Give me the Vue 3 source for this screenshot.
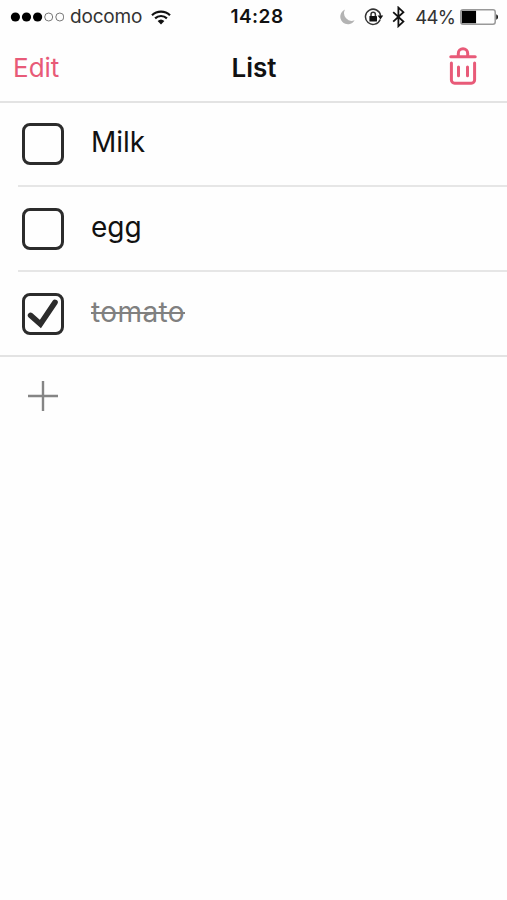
<template>
  <div class="screen">
    <div class="status-bar">
      <div class="status-left">
        <svg class="signal" width="54" height="12" viewBox="0 0 54 12">
          <circle
            v-for="n in 5"
            :key="n"
            :cx="5.4 + (n - 1) * 11.1"
            cy="6"
            :r="n <= signal ? 4.6 : 4"
            :class="n <= signal ? 'dot-on' : 'dot-off'"
          />
        </svg>
        <span class="carrier">docomo</span>
        <svg class="wifi" width="20" height="15" viewBox="0 0 20 15">
          <path d="M1 5.2a13 13 0 0 1 18 0" />
          <path d="M4.1 8.4a8.5 8.5 0 0 1 11.8 0" />
          <path class="wifi-core" d="M6.6 11.1a5 5 0 0 1 6.8 0L10 14.6z" />
        </svg>
      </div>
      <span class="clock">14:28</span>
      <div class="status-right">
        <svg class="moon" width="15" height="16" viewBox="0 0 15 16">
          <path d="M5 0.6A7.6 7.6 0 1 0 14.6 11.2A7.6 7.6 0 0 1 5 0.6z" />
        </svg>
        <svg class="lock" width="20" height="18" viewBox="0 0 20 18">
          <path class="ring" d="M16.2 11.4a7.6 7.6 0 1 1 .4-3.6" />
          <path class="fill" d="M13.6 7.6h5.6l-2.7 3.8z" />
          <rect class="fill" x="5.4" y="8" width="7.6" height="5.6" rx="0.6" />
          <path class="ring" d="M7 8V6.4a2.2 2.2 0 0 1 4.4 0V8" />
        </svg>
        <svg class="bluetooth" width="13" height="22" viewBox="0 0 13 22">
          <path d="M1.2 6.2l10.2 9.4-5 4.6V1.6l5 4.6L1.2 15.6" />
        </svg>
        <span class="percent">{{ battery }}%</span>
        <svg class="battery" width="38" height="16" viewBox="0 0 38 16">
          <rect class="shell" x="0.8" y="0.8" width="34.4" height="14.4" rx="2.2" />
          <rect x="1.8" y="1.8" :width="32.4 * battery / 100" height="12.4" />
          <path d="M36.3 5.3q1.7.6 1.7 2.7t-1.7 2.7z" />
        </svg>
      </div>
    </div>

    <header class="nav-bar">
      <button class="edit">Edit</button>
      <h1 class="title">List</h1>
      <button class="trash" @click="removeDone">
        <svg width="30" height="40" viewBox="0 0 30 40">
          <path d="M2.8 11.7h24.4" />
          <path d="M10.3 11.2V8.4a4.7 4.7 0 0 1 9.4 0v2.8" />
          <path d="M3.4 18v17a3.2 3.2 0 0 0 3.2 3.2h16.8a3.2 3.2 0 0 0 3.2-3.2V18" />
          <path d="M10.5 22v8.8M19.5 22v8.8" />
        </svg>
      </button>
    </header>

    <ul class="list">
      <li
        v-for="item in items"
        :key="item.id"
        class="row"
        :class="{ done: item.done }"
        @click="item.done = !item.done"
      >
        <span class="checkbox">
          <svg v-if="item.done" width="42" height="42" viewBox="0 0 42 42">
            <path d="M8.6 22.4L18.4 31 33 9.4" />
          </svg>
        </span>
        <span class="label">{{ item.name }}</span>
      </li>
    </ul>

    <button class="add" @click="addItem">
      <svg width="32" height="32" viewBox="0 0 32 32">
        <path d="M1 16h30M16 1v30" />
      </svg>
    </button>
  </div>
</template>

<script setup>
import { ref } from 'vue';

const signal = 3;
const battery = 44;

const items = ref([
  { id: 1, name: 'Milk', done: false },
  { id: 2, name: 'egg', done: false },
  { id: 3, name: 'tomato', done: true },
]);

function removeDone() {
  items.value = items.value.filter(item => !item.done);
}

function addItem() {
  items.value.push({ id: Date.now(), name: '', done: false });
}
</script>

<style>
body {
  margin: 0;
  background: #fefefe;
}
</style>

<style scoped>
.screen {
  min-height: 900px;
  background: #fefefe;
  color: #111;
  font-family: Inter, "Liberation Sans", sans-serif;
}

svg {
  display: block;
  flex: none;
}

button {
  padding: 0;
  border: 0;
  background: none;
  font: inherit;
}

.status-bar {
  display: grid;
  grid-template-columns: 1fr auto 1fr;
  align-items: center;
  box-sizing: border-box;
  height: 34px;
  padding: 0 9px 0 10px;
  font-size: 19px;
  line-height: 34px;
}

.status-left,
.status-right {
  display: flex;
  align-items: center;
  height: 34px;
  min-width: 0;
}

.status-right {
  justify-content: flex-end;
}

.dot-on {
  fill: #000;
}

.dot-off {
  fill: none;
  stroke: #777;
  stroke-width: 1;
}

.carrier {
  margin-left: 6px;
  color: #333;
  letter-spacing: -0.2px;
}

.wifi {
  margin-left: 9px;
  fill: none;
  stroke: #111;
  stroke-width: 2.2;
}

.wifi .wifi-core {
  fill: #111;
  stroke: none;
}

.clock {
  padding-left: 6px;
  font-weight: 600;
  letter-spacing: 0.5px;
}

.moon {
  margin-right: 9px;
  fill: #b3b3b3;
}

.lock {
  margin-right: 8px;
}

.lock .ring {
  fill: none;
  stroke: #333;
  stroke-width: 1.5;
}

.lock .fill {
  fill: #111;
}

.bluetooth {
  margin-right: 10px;
  fill: none;
  stroke: #111;
  stroke-width: 1.8;
}

.percent {
  color: #333;
  font-size: 18.5px;
  letter-spacing: -0.8px;
}

.battery {
  margin-left: 5px;
}

.battery .shell {
  fill: none;
  stroke: #999;
  stroke-width: 1.5;
}

.nav-bar {
  display: grid;
  grid-template-columns: 1fr auto 1fr;
  align-items: center;
  box-sizing: border-box;
  height: 69px;
  padding: 0 29px 0 13px;
  border-bottom: 2px solid #e3e3e3;
}

.edit {
  justify-self: start;
  color: #e85a78;
  font-size: 26px;
}

.title {
  margin: 0;
  padding-left: 17px;
  font-size: 26px;
  font-weight: 600;
}

.trash {
  justify-self: end;
  margin-bottom: 6px;
}

.trash svg {
  fill: none;
  stroke: #e85a78;
  stroke-width: 3;
  stroke-linecap: round;
}

.list {
  margin: 0;
  padding: 0 0 0 18px;
  border-bottom: 2px solid #e3e3e3;
  list-style: none;
}

.row {
  display: flex;
  align-items: center;
  box-sizing: border-box;
  height: 85px;
  padding-left: 4px;
  border-bottom: 2px solid #e6e6e6;
}

.row:first-child {
  height: 84px;
}

.row:last-child {
  height: 83px;
  border-bottom: 0;
}

.checkbox {
  box-sizing: border-box;
  width: 42px;
  height: 42px;
  border: 3px solid #2c2c2c;
  border-radius: 8px;
}

.checkbox svg {
  margin: -3px;
  fill: none;
  stroke: #2c2c2c;
  stroke-width: 5.6;
  stroke-linecap: round;
}

.label {
  margin-left: 27px;
  padding-bottom: 4px;
  font-size: 28px;
}

.done .label {
  color: #808080;
  letter-spacing: 0.4px;
  text-decoration: line-through;
}

.add {
  display: block;
  margin: 23px 0 0 27px;
}

.add svg {
  fill: none;
  stroke: #858585;
  stroke-width: 2.4;
}
</style>
